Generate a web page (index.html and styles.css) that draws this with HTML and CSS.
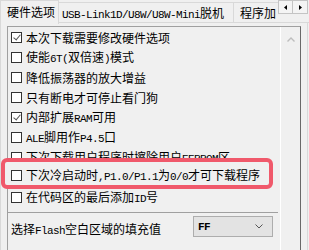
FILE: index.html
```html
<!DOCTYPE html>
<html>
  <head>
    <title>硬件选项</title>
    <link rel="stylesheet" href="styles.css">
  </head>

  <body>
    <div class="tabs">
      <div class="tab tab-active">硬件选项</div>
      <div class="tab tab-usb"><span class="en">USB-Link1D/U8W/U8W-Mini</span>脱机</div>
      <div class="tab tab-clip">程序加</div>
      <div class="tab-arrows">
        <span class="arrow-btn">
          <svg width="3" height="5" viewBox="0 0 3 5"><path d="M3 0 L0 2.5 L3 5 Z" fill="#000"/></svg>
        </span>
        <span class="arrow-btn">
          <svg width="3" height="5" viewBox="0 0 3 5"><path d="M0 0 L3 2.5 L0 5 Z" fill="#000"/></svg>
        </span>
      </div>
    </div>

    <div class="page">
      <div class="panel">
        <div class="content">
          <ul class="options">
            <li><span class="box checked"></span><span class="label">本次下载需要修改硬件选项</span></li>
            <li><span class="box"></span><span class="label">使能<span class="en">6T(</span>双倍速<span class="en">)</span>模式</span></li>
            <li><span class="box"></span><span class="label">降低振荡器的放大增益</span></li>
            <li><span class="box"></span><span class="label">只有断电才可停止看门狗</span></li>
            <li><span class="box checked"></span><span class="label">内部扩展<span class="en">RAM</span>可用</span></li>
            <li><span class="box"></span><span class="label"><span class="en">ALE</span>脚用作<span class="en">P4.5</span>口</span></li>
            <li><span class="box"></span><span class="label">下次下载用户程序时擦除用户<span class="en">EEPROM</span>区</span></li>
            <li class="marked"><span class="box"></span><span class="label">下次冷启动时<span class="en">,P1.0/P1.1</span>为<span class="en">0/0</span>才可下载程序</span></li>
            <li><span class="box"></span><span class="label">在代码区的最后添加<span class="en">ID</span>号</span></li>
          </ul>
          <div class="sep"></div>
          <div class="fill-row">
            <span class="fill-label">选择<span class="en">Flash</span>空白区域的填充值</span>
            <div class="combo">
              <span class="en combo-value">FF</span>
              <svg width="8" height="5" viewBox="0 0 8 5"><polyline points="0.5,0.5 4,4 7.5,0.5" fill="none" stroke="#555" stroke-width="1"/></svg>
            </div>
          </div>
        </div>
        <div class="vscroll">
          <svg class="up" width="8" height="5" viewBox="0 0 8 5"><polyline points="0.5,4.5 4,1 7.5,4.5" fill="none" stroke="#bdbdbd" stroke-width="1.4"/></svg>
        </div>
      </div>
    </div>
  </body>
</html>
```

FILE: styles.css
```css
:root {
  --bg: #f0f0f0;
  --line: #d9d9d9;
  --mark: #f0596b;
}

body {
  margin: 0;
  width: 309px;
  height: 250px;
  overflow: hidden;
  background: var(--bg);
  color: #000;
  font-family: "Noto Sans CJK SC", sans-serif;
  font-size: 12px;
}

.en {
  font-family: "Liberation Mono", monospace;
  font-size: 11px;
  letter-spacing: -0.6px;
}

/* tab strip */
.tabs {
  display: flex;
  height: 23px;
  border-bottom: 1px solid var(--line);
  box-sizing: border-box;
}
.tab {
  box-sizing: border-box;
  margin-top: 2px;
  height: 21px;
  line-height: 19px;
  border: 1px solid var(--line);
  border-bottom: none;
  white-space: nowrap;
  overflow: hidden;
}
.tab-active {
  margin-top: 0;
  height: 24px;
  width: 59px;
  padding-left: 6px;
  line-height: 21px;
  background: var(--bg);
  position: relative;
  z-index: 1;
}
.tab-usb {
  width: 175px;
  padding-left: 3px;
  border-left: none;
}
.tab-clip {
  width: 44px;
  padding-left: 6px;
  border-left: none;
  border-right: none;
}
.tab-arrows {
  display: flex;
  height: 14px;
}
.arrow-btn {
  width: 15px;
  height: 14px;
  box-sizing: border-box;
  border: 1px solid #c4c4c4;
  background: #f4f4f4;
  display: flex;
  align-items: center;
  justify-content: center;
}
.arrow-btn + .arrow-btn {
  border-left: none;
}

/* tab page */
.page {
  box-sizing: border-box;
  width: 308px;
  height: 227px;
  border-left: 1px solid var(--line);
  border-right: 1px solid var(--line);
  padding: 3px 6px 0 6px;
  display: flex;
  flex-direction: column;
}

.panel {
  flex: 1;
  display: flex;
  border-top: 1px solid #a0a0a0;
  border-left: 1px solid #a0a0a0;
  border-right: 1px solid #696969;
}

.content {
  width: 272px;
}

.vscroll {
  width: 19px;
  border-left: 1px solid #fff;
  display: flex;
  justify-content: center;
}
.vscroll .up {
  margin-top: 10px;
  margin-left: 1px;
}

/* checkbox list */
.options {
  list-style: none;
  margin: 0;
  padding: 0;
}
.options li {
  height: 20px;
  display: flex;
  align-items: center;
  padding-left: 3px;
  white-space: nowrap;
}
.label {
  line-height: 17px;
  padding-top: 1px;
}
.box {
  width: 11px;
  height: 11px;
  box-sizing: border-box;
  border: 1px solid #333;
  background: #fff;
  margin-right: 4px;
  flex: none;
  position: relative;
}
.box.checked::after {
  content: "";
  position: absolute;
  left: 3px;
  top: 0px;
  width: 3px;
  height: 6px;
  border: solid #555;
  border-width: 0 1px 1px 0;
  transform: rotate(40deg);
}

.options li.marked {
  position: relative;
  z-index: 1;
  margin-top: -2px;
  margin-bottom: 2px;
}
.options li.marked::before {
  content: "";
  position: absolute;
  top: -7px;
  bottom: -4px;
  left: -7px;
  right: 7px;
  border: 4px solid var(--mark);
  border-radius: 6px;
  background: var(--bg);
  z-index: -1;
}

.sep {
  margin-top: 5px;
  margin-left: -1px;
  width: 271px;
  border-top: 1px solid #a0a0a0;
}

/* fill value row */
.fill-row {
  display: flex;
  align-items: center;
  margin-top: 3px;
  padding-left: 3px;
}
.fill-label {
  padding-top: 3px;
  width: 182px;
  white-space: nowrap;
}
.combo {
  box-sizing: border-box;
  width: 80px;
  height: 21px;
  border: 1px solid #adadad;
  background: #e3e3e3;
  display: flex;
  align-items: center;
  justify-content: space-between;
  padding: 0 9px 0 4px;
}
.combo-value {
  font-weight: bold;
}
```
